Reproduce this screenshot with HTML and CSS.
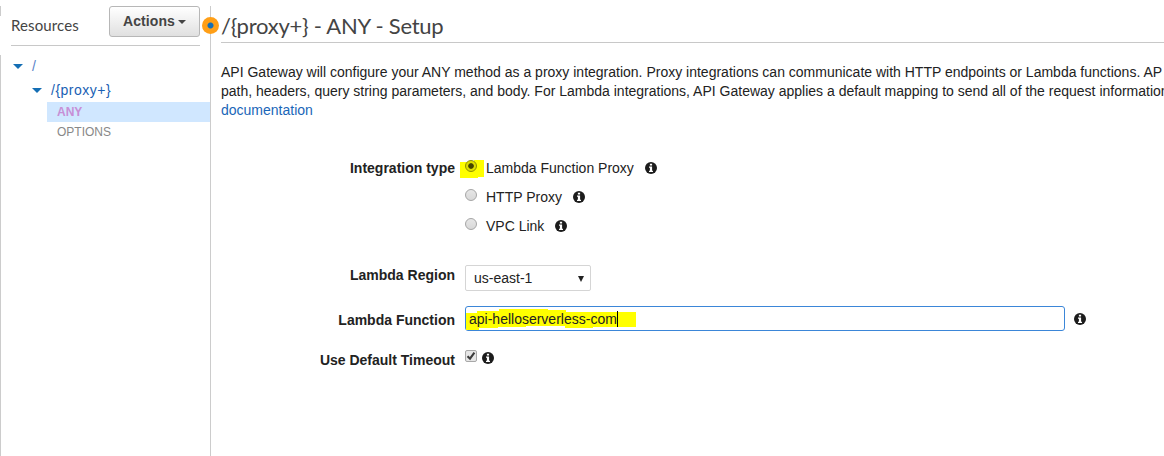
FILE: index.html
```html
<!DOCTYPE html>
<html lang="en">
<head>
<meta charset="utf-8">
<title>ANY - Setup</title>
<link rel="stylesheet" href="styles.css">
</head>
<body>
<svg class="defs" width="0" height="0">
  <symbol id="info" viewBox="0 0 12 12">
    <circle cx="6" cy="6" r="6" fill="#1c1c1c"/>
    <path d="M4.9 1.7h2.2v1.7H4.9zM4 4.5h3.1v4.2h.9V10H4V8.700h.9V5.700H4z" fill="#fff"/>
  </symbol>
</svg>
<div class="app">
  <aside class="sidebar">
    <header class="side-head">
      <h2 class="side-title">Resources</h2>
      <button class="actions">Actions<span class="caret"></span></button>
    </header>
    <ul class="tree">
      <li class="node root"><span class="arrow"></span><a class="path">/</a></li>
      <li class="node child"><span class="arrow"></span><a class="path">/{proxy+}</a></li>
      <li class="method selected">ANY</li>
      <li class="method">OPTIONS</li>
    </ul>
    <span class="handle"></span>
  </aside>
  <main class="main">
    <h1 class="title">/{proxy+} - ANY - Setup</h1>
    <p class="intro">API Gateway will configure your ANY method as a proxy integration. Proxy integrations can communicate with HTTP endpoints or Lambda functions. AP<br>path, headers, query string parameters, and body. For Lambda integrations, API Gateway applies a default mapping to send all of the request information<br><a class="link">documentation</a></p>
    <form class="form">
      <div class="row types">
        <span class="label">Integration type</span>
        <div class="options">
          <div class="option"><span class="marker"></span><span class="radio on"></span><span>Lambda Function Proxy</span><svg class="info"><use href="#info"/></svg></div>
          <div class="option"><span class="radio"></span><span>HTTP Proxy</span><svg class="info"><use href="#info"/></svg></div>
          <div class="option"><span class="radio"></span><span>VPC Link</span><svg class="info"><use href="#info"/></svg></div>
        </div>
      </div>
      <div class="row region">
        <span class="label">Lambda Region</span>
        <div class="select"><span>us-east-1</span><span class="down"></span></div>
      </div>
      <div class="row function">
        <span class="label">Lambda Function</span>
        <div class="input">
          <svg class="stroke" width="172" height="25" viewBox="0 0 172 25"><path d="M0 7h11V5h22V3h49v1h18v2h70v15h-43v1H99v-2H60v1H32v1H13v2H0z" fill="#ff0"/></svg>
          <span class="value">api-helloserverless-com</span><span class="cursor"></span>
        </div>
        <svg class="info"><use href="#info"/></svg>
      </div>
      <div class="row timeout">
        <span class="label">Use Default Timeout</span>
        <span class="check"><svg width="10" height="10" viewBox="0 0 10 10"><path d="M1.500 5.300L4 7.600L8.400 1.700" fill="none" stroke="#3c3c3c" stroke-width="2.100"/></svg></span>
        <svg class="info"><use href="#info"/></svg>
      </div>
    </form>
  </main>
</div>
</body>
</html>
```
FILE: styles.css
```css
* { box-sizing: border-box; }
body { margin: 0; background: #fff; color: #222; font: 14px/19px "Liberation Sans", Arial, sans-serif; overflow: hidden; }
.defs { position: absolute; }
.app { display: flex; height: 456px; padding-top: 6px; }
.sidebar { position: relative; flex: 0 0 211px; border-right: 1px solid #ccc; }
.sidebar::before { content: ""; position: absolute; left: 0; top: 0; width: 1px; height: 450px; background: linear-gradient(#ccc 10px, transparent 10px, transparent 49px, #ccc 49px); }
.side-head { display: flex; justify-content: space-between; height: 40px; margin: 0 10px 0 11px; border-bottom: 1px solid #c8c8c8; }
.side-title { margin: 9px 0 0; font: 400 15px/20px Lato, sans-serif; letter-spacing: .12px; color: #444; }
.actions { display: flex; align-items: center; justify-content: center; width: 91px; height: 31px; padding: 0; border: 1px solid #b7b7b7; border-radius: 3px; background: linear-gradient(#fff, #e0e0e0); color: #444; font: bold 14px/19px "Liberation Sans", Arial, sans-serif; letter-spacing: .1px; }
.caret { margin-left: 3px; border: 4px solid transparent; border-top-color: #444; border-bottom: 0; }
.tree { margin: 8px 0 0; padding: 0; list-style: none; }
.node { display: flex; align-items: center; height: 24px; }
.root { padding-left: 13px; }
.child { padding-left: 32px; }
.arrow { border: 5px solid transparent; border-top-color: #146eb4; border-bottom: 0; margin-right: 9px; }
.path { color: #1a5fb4; letter-spacing: .5px; }
.root .path { color: #5a82c8; }
.method { height: 20px; margin-left: 47px; padding-left: 10px; font-size: 12px; line-height: 20px; color: #888; }
.selected { background: #d0e7ff; color: #c78fd6; font-weight: bold; }
.handle { position: absolute; left: 202px; top: 11px; width: 17px; height: 17px; border-radius: 50%; background: radial-gradient(circle, #146eb4 2.500px, #ff9f17 3.500px); }
.main { flex: 1; min-width: 0; padding-left: 10px; overflow: hidden; }
.title { height: 37px; margin: 0; padding-top: 5px; border-bottom: 1px solid #c8c8c8; font: 400 22px/29px Lato, sans-serif; letter-spacing: -.25px; color: #444; }
.intro { margin: 20px 0 0; white-space: nowrap; }
.link { color: #1a66b8; }
.form { margin-top: 39px; }
.row { display: flex; }
.label { flex: 0 0 234px; margin-right: 10px; text-align: right; font-weight: bold; }
.option { position: relative; display: flex; height: 29px; }
.radio { position: relative; width: 12px; height: 12px; margin: 1px 9px 0 0; border: 1px solid #a5a5a5; border-radius: 50%; background: linear-gradient(#e6e6e6, #d8d8d8); }
.on { background: radial-gradient(circle, #454500 2.400px, #dede00 3.200px); border-color: #8f8f00; }
.marker { position: absolute; left: -5px; top: 1px; width: 24px; height: 18px; background: #ff0; clip-path: polygon(0 2px, 14px 2px, 14px 0, 100% 0, 100% 17px, 18px 17px, 18px 100%, 0 100%); }
.info { flex: none; width: 12px; height: 12px; margin: 3px 0 0 11px; }
.region { margin-top: 20px; }
.select { display: flex; justify-content: space-between; align-items: center; width: 126px; height: 26px; margin-top: -1px; padding: 1px 6px 0 8px; border: 1px solid #d5d5d5; border-radius: 2px; }
.down { border: 3px solid transparent; border-top: 6px solid #222; border-bottom: 0; }
.function { margin-top: 15px; }
.function .label { padding-top: 5px; }
.input { position: relative; display: flex; align-items: center; width: 600px; height: 25px; padding: 1px 0 0 3px; border: 1px solid #3b86d8; border-radius: 3px; }
.stroke { position: absolute; left: 0; top: -1px; }
.value { position: relative; }
.cursor { position: relative; width: 1px; height: 16px; background: #000; }
.function .info { margin: 7px 0 0 9px; }
.timeout { margin-top: 19px; }
.timeout .label { padding-top: 1px; }
.check { display: flex; width: 12px; height: 12px; border: 1px solid #a8a8a8; border-radius: 2px; background: #e6e6e6; }
.timeout .info { margin: 2px 0 0 5px; }
```
